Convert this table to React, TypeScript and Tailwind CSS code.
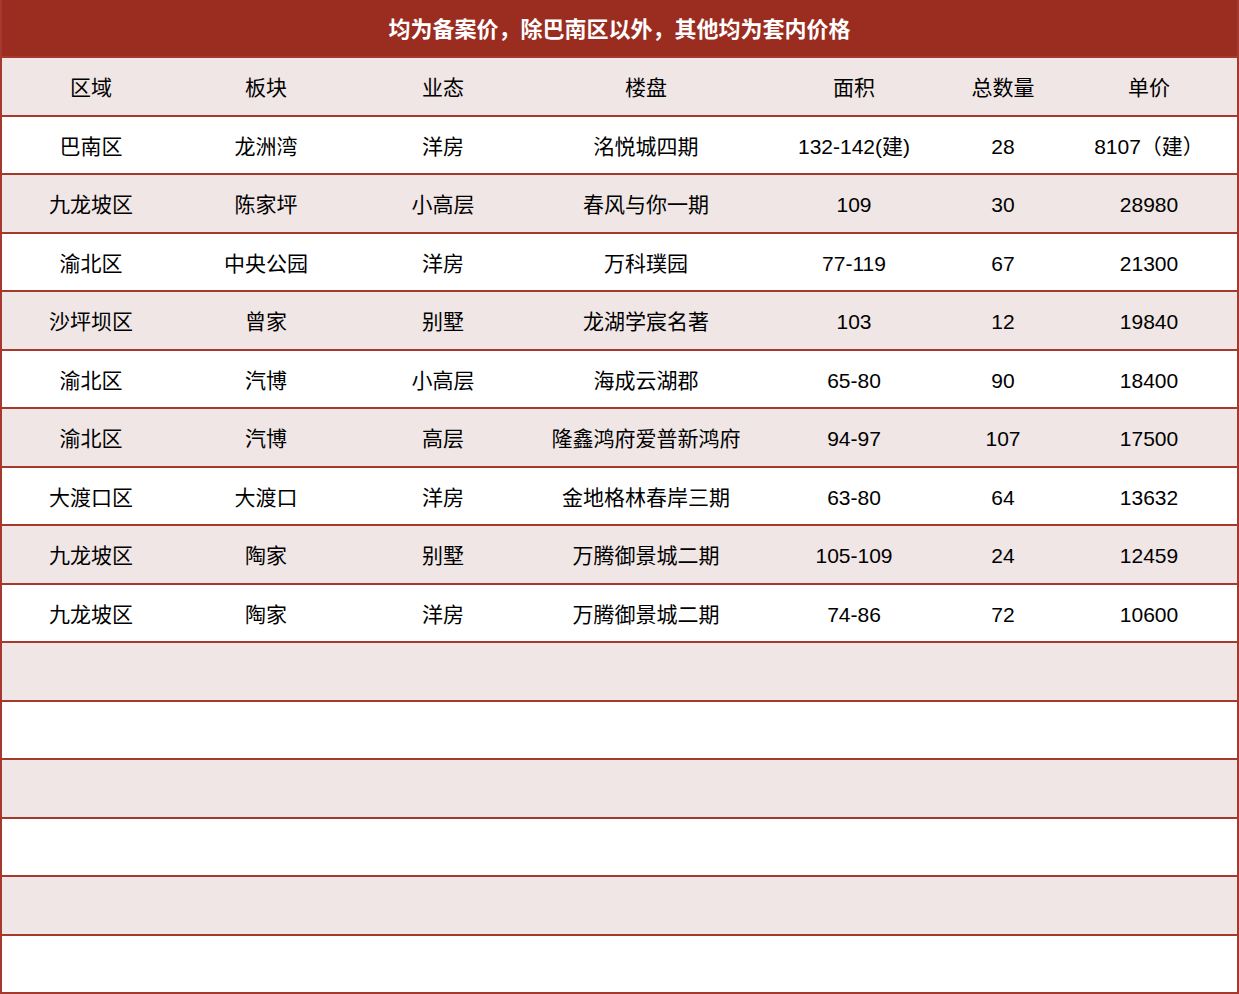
import React from 'react';

const columns = ['区域', '板块', '业态', '楼盘', '面积', '总数量', '单价'];

const rows: string[][] = [
  ['巴南区', '龙洲湾', '洋房', '洺悦城四期', '132-142(建)', '28', '8107（建）'],
  ['九龙坡区', '陈家坪', '小高层', '春风与你一期', '109', '30', '28980'],
  ['渝北区', '中央公园', '洋房', '万科璞园', '77-119', '67', '21300'],
  ['沙坪坝区', '曾家', '别墅', '龙湖学宸名著', '103', '12', '19840'],
  ['渝北区', '汽博', '小高层', '海成云湖郡', '65-80', '90', '18400'],
  ['渝北区', '汽博', '高层', '隆鑫鸿府爱普新鸿府', '94-97', '107', '17500'],
  ['大渡口区', '大渡口', '洋房', '金地格林春岸三期', '63-80', '64', '13632'],
  ['九龙坡区', '陶家', '别墅', '万腾御景城二期', '105-109', '24', '12459'],
  ['九龙坡区', '陶家', '洋房', '万腾御景城二期', '74-86', '72', '10600'],
];

const emptyRows = 6;

// column widths read off the screenshot
const colClass = ['w-[178px]', 'w-[172px]', 'w-[182px]', 'w-[224px]', 'w-[192px]', 'w-[106px]', 'flex-1 pl-[5px]'];

function Row({ cells, shaded }: { cells: string[]; shaded: boolean }) {
  return (
    <div className={`flex flex-1 items-center pt-[3px] border-t-2 border-[#a5392e] ${shaded ? 'bg-[#f0e6e5]' : 'bg-white'}`}>
      {cells.map((c, i) => (
        <div key={i} className={`${colClass[i]} text-center whitespace-nowrap`}>
          {c}
        </div>
      ))}
    </div>
  );
}

export default function App() {
  return (
    <div
      className="w-[1239px] h-[994px] flex flex-col border-x-2 border-b-2 border-[#a5392e] text-[21px] text-black bg-white"
      style={{ fontFamily: '"Liberation Sans", "Noto Sans CJK SC", sans-serif' }}
    >
      <div className="flex flex-1 items-center justify-center pt-[3px] bg-[#9a2c20] text-white text-[22px] font-bold">
        均为备案价，除巴南区以外，其他均为套内价格
      </div>
      <Row cells={columns} shaded />
      {rows.map((r, i) => (
        <Row key={i} cells={r} shaded={i % 2 === 1} />
      ))}
      {Array.from({ length: emptyRows }).map((_, i) => (
        <Row key={'e' + i} cells={['']} shaded={i % 2 === 0} />
      ))}
    </div>
  );
}
